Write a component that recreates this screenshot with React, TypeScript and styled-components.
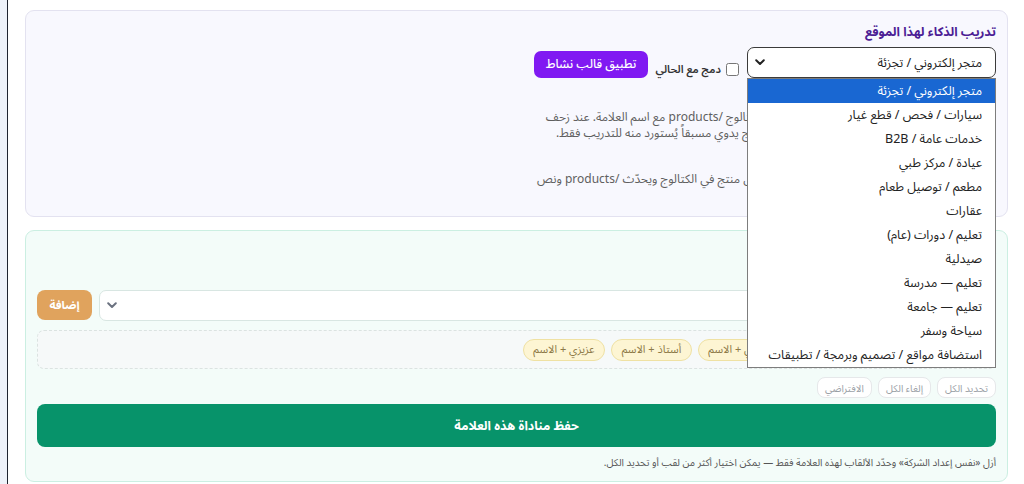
import React from "react";
import styled, { createGlobalStyle } from "styled-components";

const GlobalStyle = createGlobalStyle`
  html, body { margin: 0; padding: 0; background: #ffffff; }
  body {
    font-family: "Noto Sans Arabic", "Noto Sans", "DejaVu Sans", sans-serif;
    color: #1f2937;
  }
  *, *::before, *::after { box-sizing: border-box; }
`;

const businessTypes = [
  "متجر إلكتروني / تجزئة",
  "سيارات / فحص / قطع غيار",
  "خدمات عامة / B2B",
  "عيادة / مركز طبي",
  "مطعم / توصيل طعام",
  "عقارات",
  "تعليم / دورات (عام)",
  "صيدلية",
  "تعليم — مدرسة",
  "تعليم — جامعة",
  "سياحة وسفر",
  "استضافة مواقع / تصميم وبرمجة / تطبيقات",
];

const salutations = [
  "السيد + الاسم",
  "السيدة الفاضلة + الاسم",
  "أخي + الاسم",
  "أستاذ + الاسم",
  "عزيزي + الاسم",
];

const Shell = styled.div`
  display: flex;
  height: 484px;
  overflow: hidden;
`;

const EdgeRail = styled.div`
  width: 8px;
  flex-shrink: 0;
  background: #eef2fa;
  border-right: 1px solid #1f2430;
`;

const Main = styled.main`
  flex: 1;
  direction: rtl;
  padding: 10px 16px 0 17px;
  display: flex;
  flex-direction: column;
  gap: 13px;
`;

const Panel = styled.section<{ $tone: "violet" | "mint" }>`
  position: relative;
  border: 1px solid ${(p) => (p.$tone === "violet" ? "#e3e2f0" : "#cbefe2")};
  background: ${(p) => (p.$tone === "violet" ? "#f8f8fe" : "#f3fcf9")};
  border-radius: 9px;
  padding: 12px 11px ${(p) => (p.$tone === "violet" ? 12 : 10)}px;
`;

const Title = styled.h3<{ $color?: string }>`
  margin: 0;
  font-size: 12.5px;
  line-height: 18px;
  font-weight: 700;
  color: ${(p) => p.$color ?? "#4c1d95"};
`;

const ControlRow = styled.div`
  display: flex;
  align-items: flex-end;
  gap: 7px;
  margin-top: 6px;
`;

const SelectWrap = styled.div`
  position: relative;
  width: 249px;
  margin-left: 1px;
`;

const SelectBox = styled.div<{ $soft?: boolean }>`
  height: 31px;
  display: flex;
  align-items: center;
  justify-content: space-between;
  padding: 0 13px 0 7px;
  background: #ffffff;
  border: 1px solid ${(p) => (p.$soft ? "#d8e6e2" : "#3b3b3b")};
  border-radius: 7px;
  font-size: 12.5px;
  color: #222;
`;

const OptionList = styled.ul`
  position: absolute;
  top: 100%;
  left: 0;
  right: 0;
  z-index: 20;
  margin: 0;
  padding: 0;
  list-style: none;
  background: #ffffff;
  border: 1px solid #7d7d7d;
`;

const Option = styled.li<{ $active?: boolean }>`
  height: 24px;
  line-height: 24px;
  padding: 0 13px;
  font-size: 12.5px;
  white-space: nowrap;
  color: ${(p) => (p.$active ? "#ffffff" : "#222")};
  background: ${(p) => (p.$active ? "#1967d2" : "transparent")};
`;

const CheckLabel = styled.label<{ $weight?: number }>`
  display: flex;
  align-items: center;
  gap: 5px;
  height: 16px;
  margin-bottom: 1px;
  font-size: 11px;
  font-weight: ${(p) => p.$weight ?? 600};
  color: #333;

  input {
    margin: 0;
    width: 13px;
    height: 13px;
  }
`;

const PrimaryButton = styled.button`
  height: 27px;
  padding: 0 12px;
  border: none;
  border-radius: 7px;
  background: #8019f2;
  color: #ffffff;
  font-family: inherit;
  font-size: 12px;
  font-weight: 500;
`;

const Notes = styled.div<{ $gap: number }>`
  margin-top: ${(p) => p.$gap}px;
  font-size: 12px;
  line-height: 16px;
  color: #5f5f5f;
`;

const NoteLine = styled.div`
  white-space: nowrap;
`;

const CheckRow = styled.div`
  margin-top: 6px;
  display: flex;
`;

const AddRow = styled.div`
  display: flex;
  gap: 7px;
  margin-top: 6px;
`;

const FieldSelect = styled(SelectBox)`
  flex: 1;
  height: 31px;
  justify-content: flex-end;
`;

const AddButton = styled.button`
  width: 55px;
  height: 30px;
  border: none;
  border-radius: 8px;
  background: #e0a35d;
  color: #ffffff;
  font-family: inherit;
  font-size: 11.5px;
  font-weight: 700;
`;

const ChipTray = styled.div`
  margin-top: 9px;
  height: 39px;
  padding: 0 8px;
  display: flex;
  align-items: center;
  gap: 6px;
  background: #f6f9f9;
  border: 1px dashed #dbe3e1;
  border-radius: 7px;
`;

const Chip = styled.span`
  height: 22px;
  padding: 0 9.5px;
  display: inline-flex;
  align-items: center;
  white-space: nowrap;
  font-size: 11px;
  color: #8d7a48;
  background: #fdf5d3;
  border: 1px solid #efe1a3;
  border-radius: 999px;
`;

const ActionRow = styled.div`
  margin-top: 8px;
  display: flex;
  gap: 6px;
`;

const GhostButton = styled.button`
  height: 21px;
  padding: 0 7px;
  background: #ffffff;
  border: 1px solid #e6e8ea;
  border-radius: 8px;
  color: #9aa0a6;
  font-family: inherit;
  font-size: 10px;
`;

const SaveButton = styled.button`
  width: 100%;
  height: 43px;
  margin-top: 6px;
  border: none;
  border-radius: 8px;
  background: #07936a;
  color: #ffffff;
  font-family: inherit;
  font-size: 12.5px;
  font-weight: 700;
`;

const Hint = styled.p`
  margin: 8px 0 0;
  font-size: 10px;
  line-height: 16px;
  color: #555;
`;

function Chevron({ color = "#222" }: { color?: string }) {
  return (
    <svg width="10" height="7" viewBox="0 0 10 7">
      <path d="M1.2 1.3 L5 5 L8.8 1.3" fill="none" stroke={color} strokeWidth="2" strokeLinecap="round" strokeLinejoin="round" />
    </svg>
  );
}

export default function App() {
  return (
    <>
      <GlobalStyle />
      <Shell>
        <EdgeRail />
        <Main>
          <Panel $tone="violet">
            <Title>تدريب الذكاء لهذا الموقع</Title>
            <ControlRow>
              <SelectWrap>
                <SelectBox>
                  <span>{businessTypes[0]}</span>
                  <Chevron />
                </SelectBox>
                <OptionList>
                  {businessTypes.map((t, i) => (
                    <Option key={t} $active={i === 0}>
                      {t}
                    </Option>
                  ))}
                </OptionList>
              </SelectWrap>
              <CheckLabel>
                <input type="checkbox" />
                دمج مع الحالي
              </CheckLabel>
              <PrimaryButton>تطبيق قالب نشاط</PrimaryButton>
            </ControlRow>
            <Notes $gap={32}>
              <NoteLine>يتعلّم المساعد من صفحات الموقع العامة، وكذلك الكتالوج /products مع اسم العلامة. عند زحف</NoteLine>
              <NoteLine>الموقع تُقرأ الصفحات تلقائياً، وإن كان هناك ملف منتج يدوي مسبقاً يُستورد منه للتدريب فقط.</NoteLine>
            </Notes>
            <Notes $gap={30}>
              <NoteLine>عند الضغط على «مزامنة الآن» يقرأ النظام البيانات، كل منتج في الكتالوج ويحدّث /products ونص</NoteLine>
              <NoteLine>التدريب معاً.</NoteLine>
            </Notes>
          </Panel>

          <Panel $tone="mint">
            <Title $color="#065f46">مناداة العملاء</Title>
            <CheckRow>
              <CheckLabel $weight={500}>
                <input type="checkbox" />
                نفس إعداد الشركة
              </CheckLabel>
            </CheckRow>
            <AddRow>
              <FieldSelect $soft>
                <Chevron color="#6b7280" />
              </FieldSelect>
              <AddButton>إضافة</AddButton>
            </AddRow>
            <ChipTray>
              {salutations.map((s) => (
                <Chip key={s}>{s}</Chip>
              ))}
            </ChipTray>
            <ActionRow>
              <GhostButton>تحديد الكل</GhostButton>
              <GhostButton>إلغاء الكل</GhostButton>
              <GhostButton>الافتراضي</GhostButton>
            </ActionRow>
            <SaveButton>حفظ مناداة هذه العلامة</SaveButton>
            <Hint>أزل «نفس إعداد الشركة» وحدّد الألقاب لهذه العلامة فقط — يمكن اختيار أكثر من لقب أو تحديد الكل.</Hint>
          </Panel>
        </Main>
      </Shell>
    </>
  );
}
